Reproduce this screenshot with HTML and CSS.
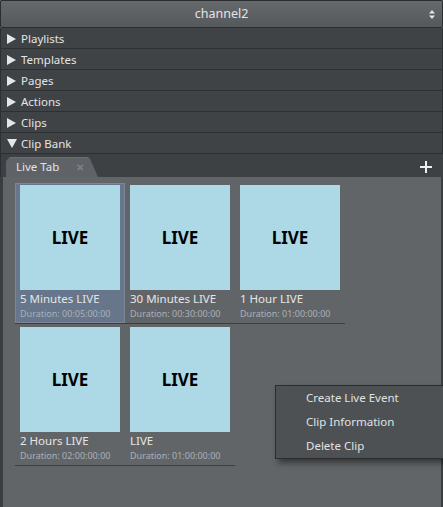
FILE: index.html
```html
<!DOCTYPE html>
<html>
<head>
<meta charset="utf-8">
<link rel="stylesheet" href="styles.css">
</head>
<body>
<div class="app">
  <div class="header">
    <span></span>
    <span class="channel">channel2</span>
    <svg class="updown" width="6" height="9" viewBox="0 0 6 9"><path d="M3 0 L6 3.5 H0 Z M0 5.5 H6 L3 9 Z" fill="#e6e6e6"/></svg>
  </div>
  <div class="row"><span class="tri right"></span>Playlists</div>
  <div class="row"><span class="tri right"></span>Templates</div>
  <div class="row"><span class="tri right"></span>Pages</div>
  <div class="row"><span class="tri right"></span>Actions</div>
  <div class="row"><span class="tri right"></span>Clips</div>
  <div class="row"><span class="tri down"></span>Clip Bank</div>
  <div class="tabbar">
    <div class="tab"><span class="tab-label">Live Tab</span><span class="tab-close">✕</span></div>
    <svg class="plus" width="12" height="12" viewBox="0 0 12 12"><path d="M5 0 H7 V5 H12 V7 H7 V12 H5 V7 H0 V5 H5 Z" fill="#eeeeee"/></svg>
  </div>
  <div class="content">
    <div class="grid">
      <div class="cell"><div class="clip selected"><div class="thumb">LIVE</div><div class="title">5 Minutes LIVE</div><div class="dur">Duration: 00:05:00:00</div></div></div>
      <div class="cell"><div class="clip"><div class="thumb">LIVE</div><div class="title">30 Minutes LIVE</div><div class="dur">Duration: 00:30:00:00</div></div></div>
      <div class="cell"><div class="clip"><div class="thumb">LIVE</div><div class="title">1 Hour LIVE</div><div class="dur">Duration: 01:00:00:00</div></div></div>
      <div class="cell"><div class="clip"><div class="thumb">LIVE</div><div class="title">2 Hours LIVE</div><div class="dur">Duration: 02:00:00:00</div></div></div>
      <div class="cell"><div class="clip"><div class="thumb">LIVE</div><div class="title">LIVE</div><div class="dur">Duration: 01:00:00:00</div></div></div>
    </div>
    <div class="menu">
      <div class="item">Create Live Event</div>
      <div class="item">Clip Information</div>
      <div class="item">Delete Clip</div>
    </div>
  </div>
</div>
</body>
</html>
```

FILE: styles.css
```css
* { box-sizing: border-box; }
html, body { margin: 0; padding: 0; }
body {
  width: 443px;
  height: 507px;
  overflow: hidden;
  background: #626568;
  font-family: "Noto Sans", "Open Sans", sans-serif;
  font-size: 11.5px;
  color: #e2e2e2;
}
.app {
  display: flex;
  flex-direction: column;
  height: 507px;
}
.header {
  height: 28px;
  flex: none;
  display: grid;
  grid-template-columns: 1fr auto 1fr;
  align-items: center;
  background: linear-gradient(#66696c, #56595c);
  border: 1px solid #2b2d2f;
  border-radius: 2px;
  font-size: 12.5px;
  color: #e4e4e4;
}
.channel { line-height: 16px; }
.updown { justify-self: end; margin-right: 7px; }
.row {
  height: 21px;
  flex: none;
  display: flex;
  align-items: center;
  background: #404346;
  border-bottom: 1px solid #2d3033;
  border-left: 1px solid #2d3033;
  border-right: 1px solid #2d3033;
  padding-left: 6px;
  padding-top: 1px;
  color: #e4e4e4;
  line-height: 16px;
}
.tri {
  width: 0;
  height: 0;
  margin-right: 6px;
}
.tri.right {
  border-top: 5px solid transparent;
  border-bottom: 5px solid transparent;
  border-left: 9px solid #e6e6e6;
  margin-right: 5px;
}
.tri.down {
  border-left: 5px solid transparent;
  border-right: 5px solid transparent;
  border-top: 9px solid #e6e6e6;
  margin-right: 4px;
}
.tabbar {
  height: 23px;
  flex: none;
  display: flex;
  align-items: flex-end;
  justify-content: space-between;
  background: #3e4144;
  padding-left: 5px;
  padding-right: 11px;
  border-left: 1px solid #2d3033;
}
.tab {
  width: 92px;
  height: 20px;
  display: flex;
  align-items: center;
  padding-left: 10px;
  background: linear-gradient(#6a6e72 0, #6a6e72 1px, #5f6367 1px);
  clip-path: polygon(0 4px, 4px 0, 82px 0, 84px 2px, 92px 20px, 0 20px);
  color: #e4e4e4;
}
.tab-label { line-height: 16px; }
.tab-close {
  margin-left: 17px;
  font-size: 10px;
  color: #7f8387;
  font-weight: bold;
}
.plus { margin-bottom: 4px; }
.content {
  flex: 1;
  position: relative;
  background: #626568;
  border-left: 3px solid #3b3e41;
  border-right: 2px solid #3b3e41;
  padding: 6px 12px 0 12px;
}
.grid {
  display: grid;
  grid-template-columns: repeat(3, 110px);
  row-gap: 1px;
}
.cell {
  border-bottom: 1px solid #3c3f42;
}
.clip {
  height: 140px;
  padding: 1px 4px;
  border: 1px solid transparent;
}
.clip.selected {
  background: #67768a;
  border-color: #7b8798;
}
.thumb {
  width: 100px;
  height: 105px;
  background: #add8e6;
  display: flex;
  align-items: center;
  justify-content: center;
  font-weight: bold;
  font-size: 17px;
  color: #000;
}
.title {
  margin-top: 1px;
  line-height: 16px;
  font-size: 11.5px;
  color: #e6e6e6;
  white-space: nowrap;
}
.dur {
  line-height: 14px;
  font-size: 9px;
  color: #a9b1ba;
  white-space: nowrap;
}
.menu {
  position: absolute;
  left: 272px;
  top: 208px;
  width: 172px;
  background: #4d5154;
  border: 1px solid #2a2c2e;
  box-shadow: 3px 4px 6px rgba(0,0,0,0.45);
}
.item {
  height: 24px;
  line-height: 24px;
  padding-left: 30px;
  color: #e2e2e2;
}
```
